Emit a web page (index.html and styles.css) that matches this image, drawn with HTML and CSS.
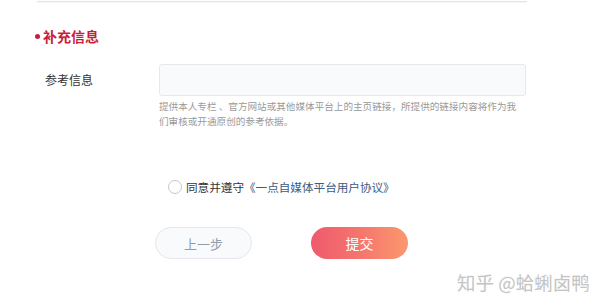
FILE: index.html
```html
<!DOCTYPE html>
<html lang="zh-CN">
<head>
<meta charset="utf-8">
<title>补充信息</title>
<link rel="stylesheet" href="styles.css">
</head>
<body>
<div class="page">
  <div class="topline"></div>
  <div class="section-title"><span class="dot"></span><span>补充信息</span></div>
  <div class="field">
    <div class="label">参考信息</div>
    <div class="control">
      <div class="input"></div>
      <p class="help">提供本人专栏 、官方网站或其他媒体平台上的主页链接，所提供的链接内容将作为我们审核或开通原创的参考依据。</p>
    </div>
  </div>
  <div class="agree">
    <span class="radio"></span>
    <span class="agree-text">同意并遵守<span class="link">《一点自媒体平台用户协议》</span></span>
  </div>
  <div class="actions">
    <button class="btn btn-prev">上一步</button>
    <button class="btn btn-submit">提交</button>
  </div>
  <div class="watermark">知乎 @蛤蜊卤鸭</div>
</div>
</body>
</html>
```
FILE: styles.css
```css
html, body {
  margin: 0;
  padding: 0;
  background: #fff;
}
body {
  width: 600px;
  height: 308px;
  overflow: hidden;
  font-family: "Noto Sans CJK SC", "Noto Sans", sans-serif;
}
.page {
  position: relative;
  width: 600px;
  height: 308px;
  display: flex;
  flex-direction: column;
}
.topline {
  margin: 1px 0 0 37px;
  width: 490px;
  height: 1px;
  background: #e4e4e4;
  box-shadow: 0 1px 1px rgba(0, 0, 0, 0.04);
}
.section-title {
  display: flex;
  align-items: center;
  gap: 3px;
  margin: 25px 0 0 35px;
  height: 18px;
  font-size: 14px;
  line-height: 18px;
  font-weight: bold;
  color: #c81e3c;
}
.dot {
  width: 5px;
  height: 5px;
  border-radius: 50%;
  background: #c81e3c;
}
.field {
  display: flex;
  margin-top: 19px;
}
.label {
  width: 114px;
  padding-left: 45px;
  font-size: 12px;
  line-height: 32px;
  color: #333;
}
.control {
  width: 367px;
}
.input {
  box-sizing: border-box;
  height: 32px;
  background: #f9fafc;
  border: 1px solid #e5e9ee;
  border-radius: 3px;
}
.help {
  margin: 3px 0 0;
  max-width: 362px;
  font-size: 9.6px;
  line-height: 15px;
  color: #9a9a9a;
}
.agree {
  display: flex;
  align-items: center;
  margin: 51px 0 0 168px;
  height: 14px;
}
.radio {
  box-sizing: border-box;
  width: 14px;
  height: 14px;
  border: 1px solid #c4c8cd;
  border-radius: 50%;
  background: #fff;
}
.agree-text {
  margin-left: 4px;
  font-size: 11.6px;
  line-height: 14px;
  color: #333;
}
.link {
  color: #3c5a82;
}
.actions {
  display: flex;
  gap: 59px;
  margin: 33px 0 0 155px;
}
.btn {
  box-sizing: border-box;
  width: 97px;
  height: 32px;
  border-radius: 16px;
  font-family: inherit;
  font-size: 13px;
  padding: 0;
  cursor: pointer;
}
.btn-prev {
  background: #f8fafc;
  border: 1px solid #e4e8ee;
  color: #939cab;
}
.btn-submit {
  border: none;
  background: linear-gradient(90deg, #ee5a6c 0%, #f6786d 55%, #fb986e 100%);
  color: #fff;
  font-size: 14px;
}
.watermark {
  position: absolute;
  left: 457px;
  top: 270px;
  font-size: 18.5px;
  line-height: 24px;
  color: #c4c4c4;
  text-shadow: 1px 1px 0 #fff, -1px -1px 0 rgba(0, 0, 0, 0.04);
  white-space: nowrap;
}
```
